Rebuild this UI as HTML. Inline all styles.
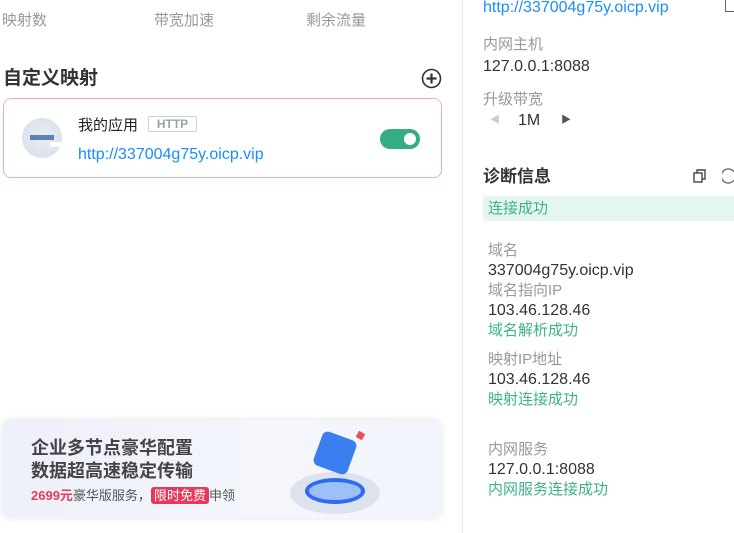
<!DOCTYPE html>
<html><head><meta charset="utf-8"><style>
*{margin:0;padding:0;box-sizing:border-box}
body{width:734px;height:533px;background:#fff;position:relative;overflow:hidden;font-family:"Liberation Sans","Noto Sans CJK SC",sans-serif;font-size:15px;color:#333}
.a{position:absolute;white-space:nowrap;line-height:20px}
.g{color:#999}
.grn{color:#3cb38a}
.blue{color:#1a8cff}
</style></head><body>
<div class="a g" style="left:2px;top:11px">映射数</div>
<div class="a g" style="left:154px;top:11px">带宽加速</div>
<div class="a g" style="left:306px;top:11px">剩余流量</div>
<div class="a" style="left:3px;top:68px;font-size:19px;font-weight:bold;line-height:22px;color:#333">自定义映射</div>
<svg class="a" style="left:421px;top:68px" width="21" height="21" viewBox="0 0 21 21"><circle cx="10.5" cy="10.5" r="9" fill="none" stroke="#333" stroke-width="1.6"/><path d="M10.5 5.5v10M5.5 10.5h10" stroke="#333" stroke-width="2.2"/></svg>
<div class="a" style="left:3px;top:98px;width:439px;height:80px;border:1px solid #f7a8bb;border-radius:8px"></div>
<div class="a" style="left:22px;top:118px;width:40px;height:40px;border-radius:50%;background:radial-gradient(circle at 50% 50%,#e9edf3,#d6dde8)"></div>
<div class="a" style="left:30px;top:135px;width:24px;height:5px;background:#5a83b3"></div>
<div class="a" style="left:50px;top:142px;width:14px;height:5px;background:#fff"></div>
<div class="a" style="left:78px;top:116px;color:#222">我的应用</div>
<div class="a" style="left:148px;top:116px;width:49px;height:16px;border:1px solid #c8d0d8;border-radius:2px;font-size:12px;line-height:14px;text-align:center;color:#9aa3ad;font-weight:bold">HTTP</div>
<div class="a blue" style="left:78px;top:145px;font-size:16px">http://337004g75y.oicp.vip</div>
<div class="a" style="left:380px;top:129px;width:40px;height:20px;border-radius:10px;background:#35ad83"></div>
<div class="a" style="left:404px;top:133px;width:12px;height:12px;border-radius:50%;background:#fff"></div>
<div class="a" style="left:3px;top:420px;width:438px;height:98px;border-radius:9px;background:linear-gradient(90deg,#eef0fa,#f4f6fc 60%,#f2f4fb);box-shadow:0 0 8px rgba(0,0,0,.12)"></div>
<div class="a" style="left:31px;top:437px;font-size:18px;line-height:23px;color:#444;font-weight:bold">企业多节点豪华配置<br>数据超高速稳定传输</div>
<div class="a" style="left:31px;top:486px;font-size:13px;color:#555"><span style="color:#e8395a;font-weight:bold">2699元</span>豪华版服务，<span style="background:#e8395a;color:#fff;padding:1px 3px;border-radius:3px">限时免费</span>申领</div>
<div class="a" style="left:290px;top:472px;width:90px;height:42px;border-radius:50%;background:#dde3ee"></div>
<div class="a" style="left:305px;top:478px;width:60px;height:26px;border-radius:50%;border:4px solid #2f6bf0;background:#9ec0f8"></div>
<div class="a" style="left:317px;top:435px;width:36px;height:36px;background:#3a7ef0;transform:rotate(20deg);border-radius:6px"></div>
<div class="a" style="left:357px;top:432px;width:7px;height:7px;background:#f04a5a;transform:rotate(30deg)"></div>
<div class="a" style="left:462px;top:0;width:1px;height:533px;background:#eee"></div>
<div class="a blue" style="left:483px;top:-2px;font-size:16px">http://337004g75y.oicp.vip</div>
<div class="a" style="left:725px;top:0;width:9px;height:12px;border:1.5px solid #666;border-top:none;border-right:none"></div>
<div class="a g" style="left:483px;top:35px">内网主机</div>
<div class="a" style="left:483px;top:57px;font-size:16px">127.0.0.1:8088</div>
<div class="a g" style="left:483px;top:90px">升级带宽</div>
<div class="a" style="left:490px;top:111px;font-size:10px;color:#ccc">◀</div>
<div class="a" style="left:518px;top:111px;font-size:16px">1M</div>
<div class="a" style="left:561px;top:111px;font-size:10px;color:#555">▶</div>
<div class="a" style="left:483px;top:166px;font-size:17px;font-weight:bold;line-height:22px;color:#333">诊断信息</div>
<svg class="a" style="left:693px;top:169px" width="14" height="14" viewBox="0 0 14 14"><rect x="1" y="4" width="8" height="9" fill="none" stroke="#444" stroke-width="1.4"/><path d="M4 4V1h8v9h-3" fill="none" stroke="#444" stroke-width="1.4"/></svg>
<svg class="a" style="left:722px;top:168px" width="14" height="16"><path d="M12 4A7 7 0 1 0 12 12" fill="none" stroke="#777" stroke-width="1.5"/></svg>
<div class="a grn" style="left:483px;top:196px;width:251px;height:25px;background:#e5f5ef;border-radius:3px 0 0 3px;padding-left:5px;line-height:25px">连接成功</div>
<div class="a g" style="left:488px;top:241px">域名</div>
<div class="a" style="left:488px;top:261px;font-size:16px">337004g75y.oicp.vip</div>
<div class="a g" style="left:488px;top:281px">域名指向IP</div>
<div class="a" style="left:488px;top:301px;font-size:16px">103.46.128.46</div>
<div class="a grn" style="left:488px;top:321px">域名解析成功</div>
<div class="a g" style="left:488px;top:350px">映射IP地址</div>
<div class="a" style="left:488px;top:370px;font-size:16px">103.46.128.46</div>
<div class="a grn" style="left:488px;top:390px">映射连接成功</div>
<div class="a g" style="left:488px;top:440px">内网服务</div>
<div class="a" style="left:488px;top:460px;font-size:16px">127.0.0.1:8088</div>
<div class="a grn" style="left:488px;top:480px">内网服务连接成功</div>
</body></html>
